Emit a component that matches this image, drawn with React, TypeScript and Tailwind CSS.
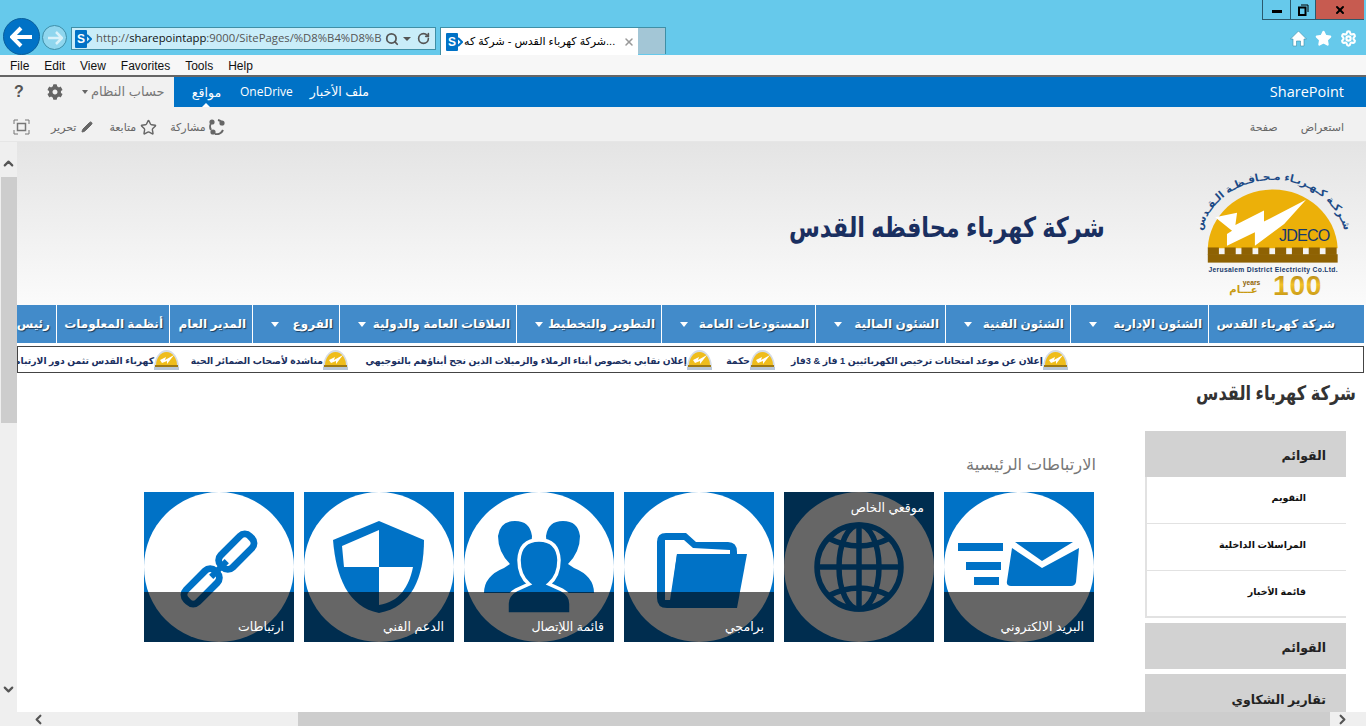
import React from 'react';
import { ChevronLeft, ChevronRight, ChevronUp, ChevronDown, Settings, RotateCw, Search, Pencil, Star, X } from 'lucide-react';
import { FaCog } from 'react-icons/fa';

const arabic = "font-['Liberation_Sans','DejaVu_Sans',sans-serif]";

const navItems = [
  { label: 'شركة كهرباء القدس', cls: 'w-[156px] pr-[29px]', caret: false },
  { label: 'الشئون الإدارية', cls: 'w-[138px] pr-[6px]', caret: true },
  { label: 'الشئون الفنية', cls: 'w-[125px] pr-[6px]', caret: true },
  { label: 'الشئون المالية', cls: 'w-[130px] pr-[6px]', caret: true },
  { label: 'المستودعات العامة', cls: 'w-[154px] pr-[6px]', caret: true },
  { label: 'التطوير والتخطيط', cls: 'w-[145px] pr-[6px]', caret: true },
  { label: 'العلاقات العامة والدولية', cls: 'w-[177px] pr-[6px]', caret: true },
  { label: 'الفروع', cls: 'w-[87px] pr-[6px]', caret: true },
  { label: 'المدير العام', cls: 'w-[83px] pr-[6px]', caret: false },
  { label: 'أنظمة المعلومات', cls: 'w-[113px] pr-[6px]', caret: false },
  { label: 'رئيس', cls: 'w-[140px] pr-[6px]', caret: false },
];

const news = [
  { text: 'إعلان عن موعد امتحانات ترخيص الكهربائيين 1 فاز & 3فاز', cls: 'w-[254px]' },
  { text: 'حكمة', cls: 'w-[24px]' },
  { text: 'إعلان نقابي بخصوص أبناء الزملاء والزميلات الذين نجح أبناؤهم بالتوجيهي', cls: 'w-[325px]' },
  { text: 'مناشدة لأصحاب الضمائر الحية', cls: 'w-[130px]' },
  { text: 'كهرباء القدس تثمن دور الارتباط العسكري', cls: 'w-[190px]' },
];

function SpIcon() {
  return (
    <svg width="17" height="18" viewBox="0 0 17 18" className="shrink-0">
      <rect x="0" y="0" width="12" height="18" rx="1" fill="#0072c6" />
      <path d="M12 5 L16 9 L12 13" fill="none" stroke="#0072c6" strokeWidth="2" />
      <text x="2" y="13" fontSize="12" fontWeight="700" fill="#fff" fontFamily="Liberation Sans">S</text>
    </svg>
  );
}

function Logo() {
  const cols = [0, 1, 2, 3, 4, 5, 6, 7];
  return (
    <div dir="ltr" className="shrink-0">
      <svg width="200" height="146" viewBox="0 0 594 434" className="block">
        <defs>
          <path id="logoArc" d="M 100 255 A 217 195 0 0 1 536 255" />
          <linearGradient id="goldFill" x1="0" y1="0" x2="0" y2="1">
            <stop offset="0" stopColor="#8f6208" />
            <stop offset="0.5" stopColor="#f2c22a" />
            <stop offset="1" stopColor="#b98a10" />
          </linearGradient>
        </defs>
        <path d="M124 262 C128 165 215 88 318 88 C420 88 505 165 510 262 Z" fill="#ecb009" />
        <path transform="translate(86 15)" d="M330 103 L205 168 L205 135 L120 178 L125 142 L60 155 L110 195 L95 205 L95 240 L178 200 L178 240 L265 175 Z" fill="#fff" />
        <rect x="124" y="280" width="386" height="25" fill="#8e6203" />
        {cols.map(i => (
          <rect key={i} x={124 + i * 50} y="260" width="33" height="22" fill="#8e6203" />
        ))}
        <text x="336" y="242" fontSize="48" fill="#17396b" fontFamily="Liberation Sans" textLength="152">JDECO</text>
        <text fontSize="31" fontWeight="700" fill="#1c4a86" fontFamily="DejaVu Sans">
          <textPath href="#logoArc" startOffset="50%" textAnchor="middle">شـركـة كـهـربـاء مـحـافـظـة الـقـدس</textPath>
        </text>
        <text x="126" y="332" fontSize="20" fontWeight="700" fill="#17396b" fontFamily="Liberation Sans" textLength="384">Jerusalem District Electricity Co.Ltd.</text>
        <text x="318" y="400" fontSize="84" fontWeight="700" fill="url(#goldFill)" fontFamily="Liberation Sans" textLength="144">100</text>
        <text x="228" y="372" fontSize="20" fontWeight="700" fill="#8e6203" fontFamily="Liberation Sans">years</text>
        <text x="188" y="396" fontSize="30" fontWeight="700" fill="#c89a12" fontFamily="DejaVu Sans">عـــام</text>
      </svg>
    </div>
  );
}

function LogoThumb() {
  return (
    <svg width="25" height="24" viewBox="0 0 25 24" className="shrink-0 -mt-[4px]">
      <path d="M0 20 A12.5 18 0 0 1 25 20 Z" fill="#d5dce6" />
      <path d="M2 18 A10.5 14 0 0 1 23 18 Z" fill="#efbd1c" />
      <path d="M20 7 L11 12 L12 9 L6 12 L8 15 L13 13 L13 16 Z" fill="#fff" />
      <rect x="1" y="17" width="23" height="2" fill="#a07a12" />
      <rect x="0" y="19" width="25" height="3" fill="#b9c6d6" />
    </svg>
  );
}

function MailArt() {
  return (
    <g fill="#0072c6">
      <rect x="14" y="51" width="45" height="8" />
      <rect x="22" y="70" width="35" height="8" />
      <rect x="30" y="85" width="25" height="8" />
      <path d="M71 50 H129 L98 69 Z" />
      <path d="M68 56 L98 76 L135 56 L132 90 Q131 94 127 94 H67 Q62 94 63 89 Z" />
    </g>
  );
}

function GlobeArt() {
  return (
    <g fill="none" stroke="#0072c6" strokeWidth="5.5">
      <circle cx="75" cy="75" r="42" />
      <ellipse cx="75" cy="75" rx="20" ry="42" />
      <path d="M75 33 V117 M33 75 H117" />
      <path d="M44 46 Q75 62 106 46 M44 104 Q75 88 106 104" />
    </g>
  );
}

function FolderArt() {
  return (
    <g>
      <path d="M33 50 Q33 41 42 41 H62 L72 50 H104 Q113 50 113 60 V106 Q113 116 104 116 H43 Q33 116 33 106 Z" fill="#0072c6" />
      <path d="M41 48 H60 L69 56 L106 58 V62 H53 L46 108 H41 Z" fill="#fff" />
      <path d="M53 62 H123 L113 116 H46 Z" fill="#0072c6" />
    </g>
  );
}

function PeopleArt() {
  return (
    <g>
      <path d="M20 101 Q20 84 40 76 L46 72 Q34 60 34 44 Q36 29 51 29 Q66 29 68 44 Q68 60 58 72 L72 80 V101 Z" fill="#0072c6" />
      <path d="M130 101 Q130 84 110 76 L104 72 Q116 60 116 44 Q114 29 99 29 Q84 29 82 44 Q82 60 92 72 L78 80 V101 Z" fill="#0072c6" />
      <path d="M43 122 V112 Q43 103 52 98 L65 92 Q55 84 55 68 Q56 48 75 48 Q94 48 95 68 Q95 84 85 92 L98 98 Q107 103 107 112 V122 Z" fill="#0072c6" stroke="#fff" strokeWidth="3.5" />
    </g>
  );
}

function ShieldArt() {
  return (
    <g>
      <path d="M75 29 L120 48 C120 85 108 115 75 121 C44 115 32 85 29 48 Z" fill="#0072c6" />
      <path d="M38 54 L75 38 V75 H40 Z" fill="#fff" />
      <path d="M75 75 H109 C105 95 95 110 75 113 Z" fill="#fff" />
    </g>
  );
}

function LinkArt() {
  return (
    <g fill="none" stroke="#0072c6" strokeWidth="7" transform="rotate(-45 75 77)">
      <rect x="79" y="68.5" width="41" height="17" rx="7" />
      <rect x="30" y="68.5" width="41" height="17" rx="7" />
      <path d="M64 77 H86" strokeWidth="6" />
    </g>
  );
}

const tiles = [
  { label: 'البريد الالكتروني', art: <MailArt />, hovered: false },
  { label: 'موقعي الخاص', art: <GlobeArt />, hovered: true },
  { label: 'برامجي', art: <FolderArt />, hovered: false },
  { label: 'قائمة اللإتصال', art: <PeopleArt />, hovered: false },
  { label: 'الدعم الفني', art: <ShieldArt />, hovered: false },
  { label: 'ارتباطات', art: <LinkArt />, hovered: false },
];

function Tile({ label, art, hovered }: { label: string; art: React.ReactNode; hovered: boolean }) {
  return (
    <div className="relative w-[150px] h-[150px] bg-[#0072c6] overflow-hidden shrink-0">
      <svg width="150" height="150" viewBox="0 0 150 150" className="block">
        <circle cx="75" cy="75" r="75" fill="#fff" />
        {art}
      </svg>
      {hovered ? (
        <div className="absolute inset-0 bg-black/60 pt-[7px] pr-[10px] text-white text-[12.5px] leading-[18px]">{label}</div>
      ) : (
        <div className="absolute left-0 right-0 bottom-0 h-[50px] bg-black/60 pt-[26px] pr-[10px] text-white text-[12.5px] leading-[18px]">{label}</div>
      )}
    </div>
  );
}

export default function App() {
  return (
    <div className={`w-[1366px] h-[726px] overflow-hidden flex flex-col bg-white ${arabic}`}>
      {/* browser chrome */}
      <div className="h-[55px] bg-[#66c9eb] flex flex-col shrink-0">
        <div className="h-[27px] flex justify-end items-start pr-[2px]">
          <div className="flex h-[20px] border-l border-b border-[#2a5a6e]">
            <div className="w-[28px] flex items-center justify-center border-r border-[#2a5a6e]">
              <div className="w-[10px] h-[3px] bg-black mt-[3px]"></div>
            </div>
            <div className="w-[25px] flex items-center justify-center border-r border-[#2a5a6e]">
              <svg width="11" height="12" viewBox="0 0 11 12" fill="none" stroke="#000">
                <path d="M3 1 H10 V8" strokeWidth="1" />
                <rect x="1" y="3.5" width="6.5" height="7.5" strokeWidth="2" />
              </svg>
            </div>
            <div className="w-[48px] bg-[#c75b50] flex items-center justify-center">
              <X size={12} strokeWidth={4} className="text-black" />
            </div>
          </div>
        </div>
        <div className="h-[28px] flex items-start">
          <div className="size-[37px] -mt-[9px] ml-[3px] rounded-full bg-[#0072c6] border border-[#0a5f9c] flex items-center justify-center shrink-0">
            <svg width="24" height="22" viewBox="0 0 24 22"><path d="M11 2 L2 11 L11 20 M2 11 H22" fill="none" stroke="#fff" strokeWidth="4" /></svg>
          </div>
          <div className="size-[25px] ml-[2px] mt-[-2px] rounded-full bg-[#8fd6ee] border border-[#3d8ea8] flex items-center justify-center shrink-0">
            <svg width="16" height="14" viewBox="0 0 16 14"><path d="M9 1 L15 7 L9 13 M15 7 H1" fill="none" stroke="#d9f2fa" strokeWidth="2.5" /></svg>
          </div>
          <div className="w-[365px] h-[23px] ml-[4px] bg-[#c9edf9] border border-[#3f8fa6] flex items-center pl-[3px] pr-[2px] shrink-0">
            <SpIcon />
            <div className="ml-[4px] w-[286px] text-[11.3px] text-[#555] font-['Open_Sans',sans-serif] whitespace-nowrap overflow-hidden">http://<span className="text-[#111]">sharepointapp</span>:9000/SitePages/%D8%B4%D8%B</div>
            <Search size={14} strokeWidth={3} className="text-[#555] ml-[3px]" />
            <div className="ml-[4px] w-0 h-0 border-x-[4px] border-x-transparent border-t-[4px] border-t-[#555]"></div>
            <RotateCw size={13} strokeWidth={3} className="text-[#555] ml-[6px]" />
          </div>
          <div className="w-[198px] h-[28px] ml-[4px] bg-white border-l border-t border-[#3f8fa6] flex items-center pl-[5px] shrink-0">
            <SpIcon />
            <div className="ml-[1px] w-[157px] text-[11px] text-black whitespace-nowrap overflow-hidden">شركة كهرباء القدس - شركة كه...</div>
            <X size={12} strokeWidth={3} className="text-[#999] ml-[2px]" />
          </div>
          <div className="w-[28px] h-[27px] bg-[#a3c6d6] border-t border-r border-[#3f8fa6] shrink-0"></div>
          <div className="flex-1 flex justify-end items-center gap-[8px] pr-[9px] mt-[3px] text-white">
            <svg width="17" height="17" viewBox="0 0 17 17" fill="#fff" stroke="#3d8ea8" strokeWidth="0.6">
              <path d="M8.5 1 L16.5 9 H14 V16 H10.5 V11 H6.5 V16 H3 V9 H0.5 Z" />
            </svg>
            <Star size={17} fill="#fff" />
            <Settings size={17} strokeWidth={3} />
          </div>
        </div>
      </div>

      {/* menu bar */}
      <div className="h-[22px] bg-[#f7f7f7] border-b-2 border-[#666] flex items-center pt-[1px] text-[12px] text-[#111] font-['Liberation_Sans',sans-serif] shrink-0">
        <span className="ml-[10px]">File</span>
        <span className="ml-[15px]">Edit</span>
        <span className="ml-[15px]">View</span>
        <span className="ml-[15px]">Favorites</span>
        <span className="ml-[15px]">Tools</span>
        <span className="ml-[15px]">Help</span>
      </div>

      {/* suite bar */}
      <div className="h-[30px] flex shrink-0 pt-0">
        <div className="w-[174px] bg-[#f1f1f1] flex items-center text-[#777] shrink-0">
          <span className="ml-[14px] w-[9px] font-bold text-[16px] text-[#555] font-['Liberation_Sans']">?</span>
          <FaCog size={16} className="ml-[24px] text-[#666] shrink-0" />
          <div className="ml-[19px] w-0 h-0 border-x-[3px] border-x-transparent border-t-[4px] border-t-[#666] shrink-0"></div>
          <span className="ml-[3px] text-[13px] leading-[20px] whitespace-nowrap" dir="rtl">حساب النظام</span>
        </div>
        <div className="flex-1 bg-[#0072c6] flex items-center text-white text-[12.5px] pl-[17px] pr-[22px]">
          <div className="relative h-full flex items-center w-[31px] justify-center">
            <span className="mt-[2px]">مواقع</span>
            <div className="absolute bottom-0 left-[11px] w-0 h-0 border-x-[4px] border-x-transparent border-b-[4px] border-b-white"></div>
          </div>
          <span className="ml-[18px] font-['Open_Sans',sans-serif] text-[12px]">OneDrive</span>
          <span className="ml-[17px]" dir="rtl">ملف الأخبار</span>
          <span className="ml-auto font-['Open_Sans',sans-serif] text-[14.5px]">SharePoint</span>
        </div>
      </div>

      {/* ribbon */}
      <div className="h-[35px] bg-[#f1f1f1] flex items-center pt-[6px] text-[11px] text-[#666] border-b border-[#e6e6e6] shrink-0">
        <svg width="17" height="16" viewBox="0 0 17 16" className="ml-[13px]" fill="none" stroke="#777">
          <path d="M1 5 V1 H5 M12 1 H16 V5 M16 11 V15 H12 M5 15 H1 V11" />
          <rect x="4.5" y="4.5" width="8" height="7" strokeWidth="1.5" />
        </svg>
        <span className="ml-[21px]" dir="rtl">تحرير</span>
        <Pencil size={12} fill="#666" className="ml-[5px]" />
        <span className="ml-[16px]" dir="rtl">متابعة</span>
        <Star size={17} className="ml-[4px]" />
        <span className="ml-[13px]" dir="rtl">مشاركة</span>
        <svg width="16" height="16" viewBox="0 0 16 16" className="ml-[3px]" fill="none" stroke="#666" strokeWidth="2">
          <path d="M4 2 A7 7 0 0 0 2 11 M6 15 A7 7 0 0 0 14 11 M14 6 A7 7 0 0 0 9 1" />
          <circle cx="3" cy="3" r="1.6" fill="#666" /><circle cx="13" cy="4" r="1.6" fill="#666" /><circle cx="4" cy="13" r="1.6" fill="#666" />
        </svg>
        <span className="ml-auto" dir="rtl">صفحة</span>
        <span className="ml-[23px] mr-[22px]" dir="rtl">استعراض</span>
      </div>

      {/* page body */}
      <div className="flex-1 flex min-h-0">
        <div className="w-[17px] bg-[#efefef] flex flex-col items-center shrink-0">
          <ChevronUp size={15} strokeWidth={3.5} className="text-[#555] mt-[14px]" />
          <div className="w-[16px] h-[246px] bg-[#cdcdcd] mt-[6px]"></div>
          <ChevronDown size={15} strokeWidth={3.5} className="text-[#555] mt-auto mb-[15px]" />
        </div>

        <div dir="rtl" className="flex-1 min-w-0 overflow-hidden">
          <div className="h-[163px] bg-gradient-to-b from-[#e4e4e4] to-[#fbfbfb] flex items-start">
            <div className="pt-[18px]"><Logo /></div>
            <h1 className="mr-[61px] mt-[68px] text-[28px] leading-[36px] font-bold text-[#1a2f60] whitespace-nowrap origin-right scale-x-[0.8]">شركة كهرباء محافظه القدس</h1>
          </div>

          <div className="h-[38px] mr-[2px] bg-[#428bca] flex overflow-hidden">
            {navItems.map(item => (
              <div key={item.label} className={`${item.cls} h-full shrink-0 border-l border-white flex items-center whitespace-nowrap text-white font-bold text-[12px] [text-shadow:1px_1px_1px_#1b3a57]`}>
                <span>{item.label}</span>
                {item.caret && <div className="mr-auto ml-[18px] w-0 h-0 border-x-[4px] border-x-transparent border-t-[5px] border-t-white"></div>}
              </div>
            ))}
          </div>

          <div className="h-[27px] mt-[3px] mr-[2px] border border-[#444] flex items-center overflow-hidden pr-[295px] text-[9.2px] font-bold text-[#1a2f60] whitespace-nowrap">
            {news.map(n => (
              <div key={n.text} className="flex items-center shrink-0 ml-[14px] pt-[4px]">
                <LogoThumb />
                <span className={n.cls}>{n.text}</span>
              </div>
            ))}
          </div>

          <h2 className="mt-[7px] mr-[10px] text-[20px] leading-[26px] font-bold text-[#333] origin-right scale-x-[0.81]">شركة كهرباء القدس</h2>

          <div className="flex mt-[25px] items-start">
            <aside className="w-[201px] mr-[20px] shrink-0">
              <div className="h-[46px] bg-[#d2d2d2] flex items-center pt-[4px] pr-[20px] text-[12.5px] font-bold text-[#222]">القوائم</div>
              <div className="h-[47px] border-b border-l-[2px] border-[#e2e2e2] flex items-center pb-[4px] pr-[40px] text-[9.5px] font-bold text-[#111]">التقويم</div>
              <div className="h-[47px] border-b border-l-[2px] border-[#e2e2e2] flex items-center pb-[4px] pr-[40px] text-[9.5px] font-bold text-[#111]">المراسلات الداخلية</div>
              <div className="h-[47px] border-b-2 border-l-[2px] border-[#e2e2e2] flex items-center pb-[2px] pr-[40px] text-[9.5px] font-bold text-[#111]">قائمة الأخبار</div>
              <div className="h-[46px] mt-[5px] bg-[#d2d2d2] flex items-center pt-[4px] pr-[20px] text-[12.5px] font-bold text-[#222]">القوائم</div>
              <div className="h-[46px] mt-[5px] bg-[#d2d2d2] flex items-center pt-[6px] pr-[20px] text-[12.5px] font-bold text-[#222]">تقارير الشكاوي</div>
            </aside>
            <div className="mr-[51px]">
              <h3 className="mt-[20px] -mr-[2px] text-[16.3px] leading-[26px] text-[#777] font-normal">الارتباطات الرئيسية</h3>
              <div className="flex gap-[10px] mt-[15px]">
                {tiles.map(t => (
                  <Tile key={t.label} label={t.label} art={t.art} hovered={t.hovered} />
                ))}
              </div>
            </div>
          </div>
        </div>
      </div>

      {/* bottom scrollbar */}
      <div className="h-[14px] bg-[#efefef] flex items-center shrink-0 relative">
        <ChevronLeft size={15} strokeWidth={3.5} className="text-[#555] ml-[31px]" />
        <div className="w-[1032px] h-full bg-[#cdcdcd] ml-[252px]"></div>
        <ChevronRight size={15} strokeWidth={3.5} className="text-[#555] ml-[5px]" />
      </div>
    </div>
  );
}
